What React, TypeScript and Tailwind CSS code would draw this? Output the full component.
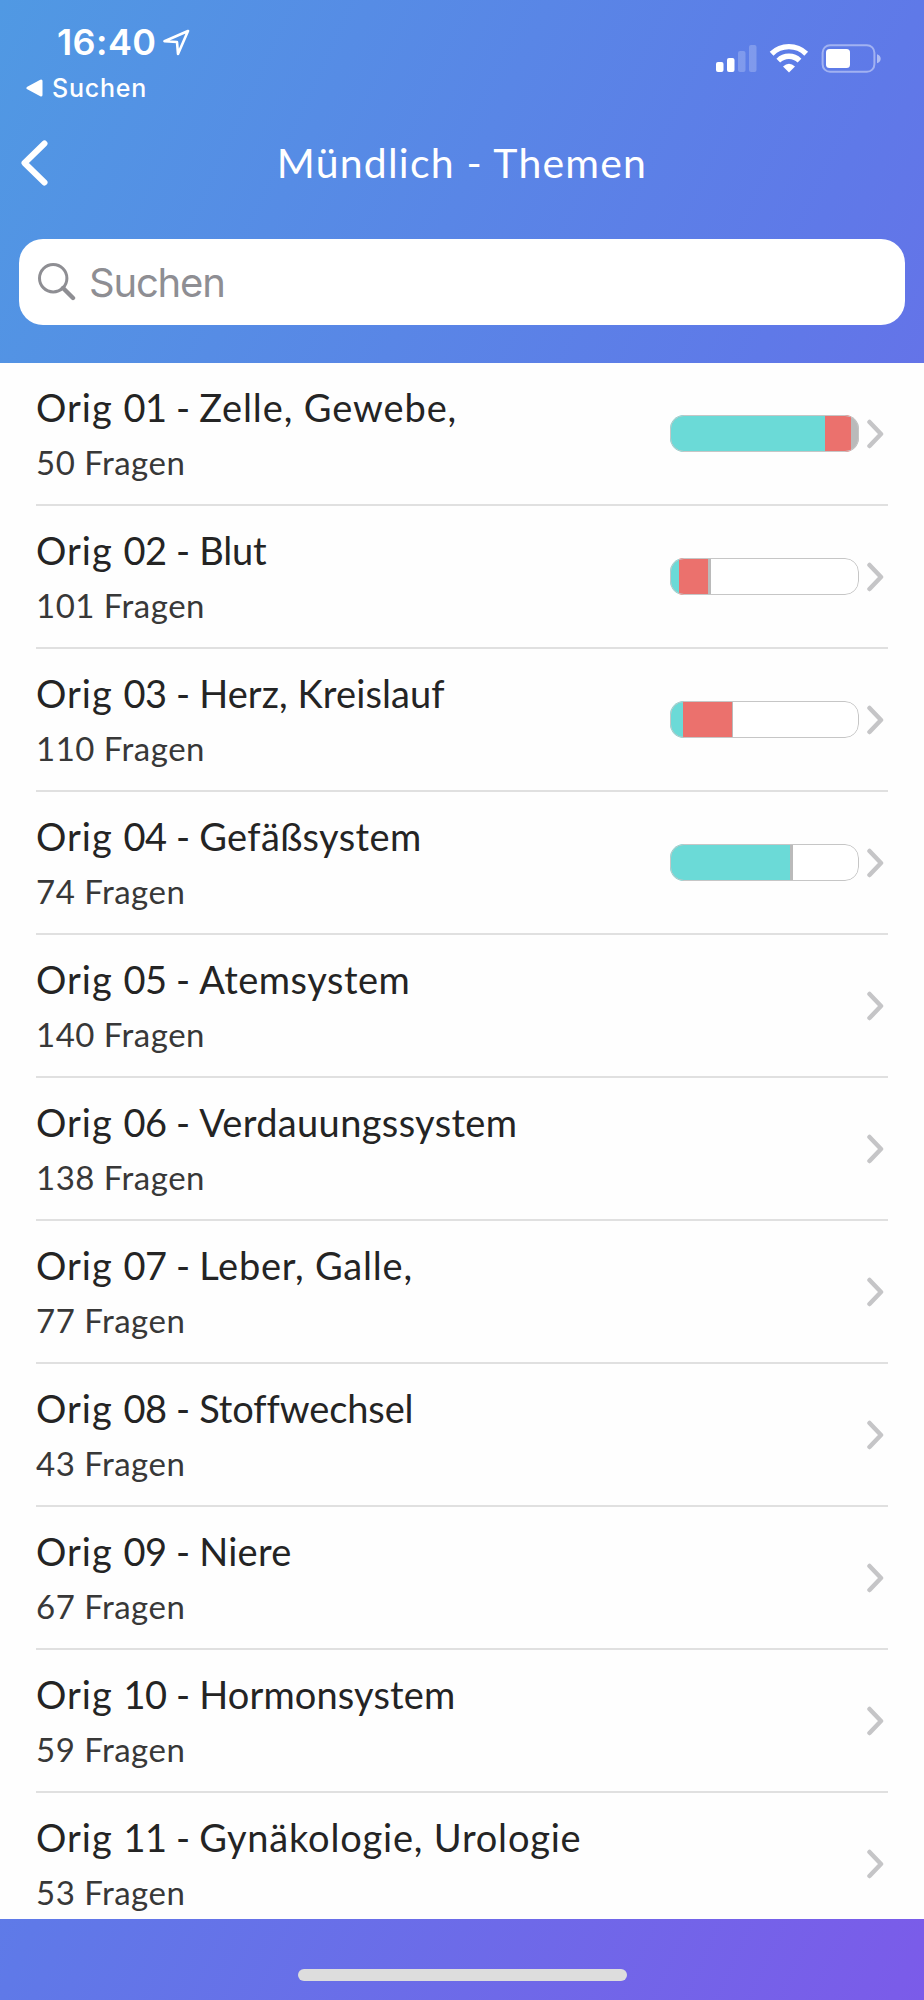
import React from 'react'

type Topic = {
  number: string
  name: string
  count: number
  spacing: string
  // widths in px of the correct / wrong / skipped parts of the bar
  progress?: [number, number, number]
}

const topics: Topic[] = [
  { number: '01', name: 'Zelle, Gewebe,', count: 50, spacing: 'tracking-[0.9px]', progress: [155, 26, 8] },
  { number: '02', name: 'Blut', count: 101, spacing: 'tracking-[-0.2px]', progress: [9, 29, 3] },
  { number: '03', name: 'Herz, Kreislauf', count: 110, spacing: 'tracking-[0.1px]', progress: [13, 49, 1] },
  { number: '04', name: 'Gefäßsystem', count: 74, spacing: 'tracking-[0.4px]', progress: [120, 0, 3] },
  { number: '05', name: 'Atemsystem', count: 140, spacing: 'tracking-[0.5px]' },
  { number: '06', name: 'Verdauungssystem', count: 138, spacing: 'tracking-[0.35px]' },
  { number: '07', name: 'Leber, Galle,', count: 77, spacing: 'tracking-[0.8px]' },
  { number: '08', name: 'Stoffwechsel', count: 43, spacing: 'tracking-[-0.1px]' },
  { number: '09', name: 'Niere', count: 67, spacing: 'tracking-[0.3px]' },
  { number: '10', name: 'Hormonsystem', count: 59, spacing: 'tracking-[0.15px]' },
  { number: '11', name: 'Gynäkologie, Urologie', count: 53, spacing: 'tracking-[0.8px]' },
]

const StatusBar = () => (
  <div className="flex h-[110px] justify-between font-['Inter',sans-serif] text-white">
    <div className="pt-[22px]">
      <div className="flex h-10 items-center pl-[57px]">
        <span className="text-[36px] leading-10 font-semibold tracking-[0.4px]">16:40</span>
        <svg className="ml-[7px]" width="27" height="27" viewBox="0 0 27 27" fill="none">
          <path d="M25 2 1.5 12.3 14 13 15 25Z" stroke="white" strokeWidth="2.6" strokeLinejoin="round" />
        </svg>
      </div>
      <div className="mt-[10px] flex h-8 items-center pl-[26px]">
        <svg width="17" height="18" viewBox="0 0 17 18">
          <path d="M2 9 15 2v14Z" fill="white" stroke="white" strokeWidth="3" strokeLinejoin="round" />
        </svg>
        <span className="ml-[9px] text-[25px] leading-8 font-medium tracking-[0.8px]">Suchen</span>
      </div>
    </div>
    <svg className="mt-[42px] mr-[42px]" width="168" height="32" viewBox="0 0 168 32" fill="white">
      <rect x="2" y="20" width="7.5" height="10" rx="2" />
      <rect x="13" y="16" width="7.5" height="14" rx="2" />
      <rect x="24" y="9" width="7.5" height="21" rx="2" opacity="0.22" />
      <rect x="35" y="3" width="7.5" height="27" rx="2" opacity="0.22" />
      <g fill="none" stroke="white" strokeWidth="5.4">
        <path d="M57.6 11.7a24.8 24.8 0 0 1 34.6 0" />
        <path d="M64.3 18.6a15.2 15.2 0 0 1 21.2 0" />
      </g>
      <path d="M69 24.5q6-5.4 12 0L75 30.5Z" />
      <rect x="108.6" y="3.2" width="51.8" height="26.6" rx="7.5" fill="none" stroke="white" strokeWidth="2" opacity="0.42" />
      <rect x="112" y="7" width="24" height="19" rx="3.5" />
      <path d="M163 12.2q3.7 1.1 3.7 4.5t-3.7 4.5Z" opacity="0.5" />
    </svg>
  </div>
)

const NavBar = () => (
  <div className="flex h-[106px] items-center px-5 text-white">
    <svg width="29" height="46" viewBox="0 0 29 46" fill="none">
      <path d="M24.5 3.5 4.500 23l20 19.500" stroke="white" strokeWidth="6" strokeLinecap="round" strokeLinejoin="round" />
    </svg>
    <h1 className="mr-[29px] flex-1 text-center text-[41px] leading-[50px] tracking-[1.2px]">Mündlich - Themen</h1>
  </div>
)

const SearchField = () => (
  <div className="mx-[19px] mt-[23px] flex h-[86px] items-center rounded-[24px] bg-white pl-[19px] text-[#8e8e93]">
    <svg width="38" height="38" viewBox="0 0 38 38" fill="none" stroke="currentColor">
      <circle cx="15.2" cy="15.2" r="13.7" strokeWidth="3" />
      <path d="M25 25l10 10" strokeWidth="4.4" strokeLinecap="round" />
    </svg>
    <span className="mt-[2px] ml-[13px] font-['Inter',sans-serif] text-[40px] leading-[50px] tracking-[-1.2px]">Suchen</span>
  </div>
)

const ProgressBar = ({ parts }: { parts: [number, number, number] }) => {
  const [correct, wrong, skipped] = parts
  return (
    <div className="relative flex h-[37px] w-[189px] overflow-hidden rounded-[14px] bg-white">
      <div className="bg-[#6bdad7]" style={{ width: correct }} />
      <div className="bg-[#eb716d]" style={{ width: wrong }} />
      <div className="bg-[#bababa]" style={{ width: skipped }} />
      <div className="absolute inset-0 rounded-[14px] border border-[#c6c6c6]" />
    </div>
  )
}

const TopicRow = ({ topic }: { topic: Topic }) => (
  <li className="mx-9 flex h-[143px] shrink-0 items-center border-b-2 border-[#e0e0e0]">
    <div className="flex-1 pt-[2px]">
      <div className="text-[38px] leading-[50px] whitespace-nowrap text-[#242424]">
        <span className="tracking-[1px]">Orig </span>
        <span className="tracking-[-0.4px]">{topic.number} - </span>
        <span className={topic.spacing}>{topic.name}</span>
      </div>
      <div className="mt-[5px] text-[33px] leading-[50px] tracking-[0.5px] text-[#383838]">{topic.count} Fragen</div>
    </div>
    {topic.progress && <ProgressBar parts={topic.progress} />}
    <svg className="mr-1 ml-2" width="17" height="30" viewBox="0 0 17 30" fill="none">
      <path d="M2.5 3 14 15 2.5 27" stroke="#c5c5c7" strokeWidth="4.5" strokeLinecap="round" strokeLinejoin="round" />
    </svg>
  </li>
)

const App = () => (
  <div className="flex h-[2000px] w-[924px] flex-col overflow-hidden bg-linear-[to_bottom_right,#5099e3,#5f79e8,#7b5be9] font-['Lato',sans-serif]">
    <header className="h-[363px] shrink-0">
      <StatusBar />
      <NavBar />
      <SearchField />
    </header>
    <ul className="flex h-[1556px] shrink-0 flex-col overflow-hidden bg-[#fefefe]">
      {topics.map((topic) => (
        <TopicRow key={topic.number} topic={topic} />
      ))}
    </ul>
    <footer className="flex flex-1 items-end justify-center pb-[19px]">
      <div className="h-3 w-[329px] rounded-full bg-[#dddddd]" />
    </footer>
  </div>
)

export default App
